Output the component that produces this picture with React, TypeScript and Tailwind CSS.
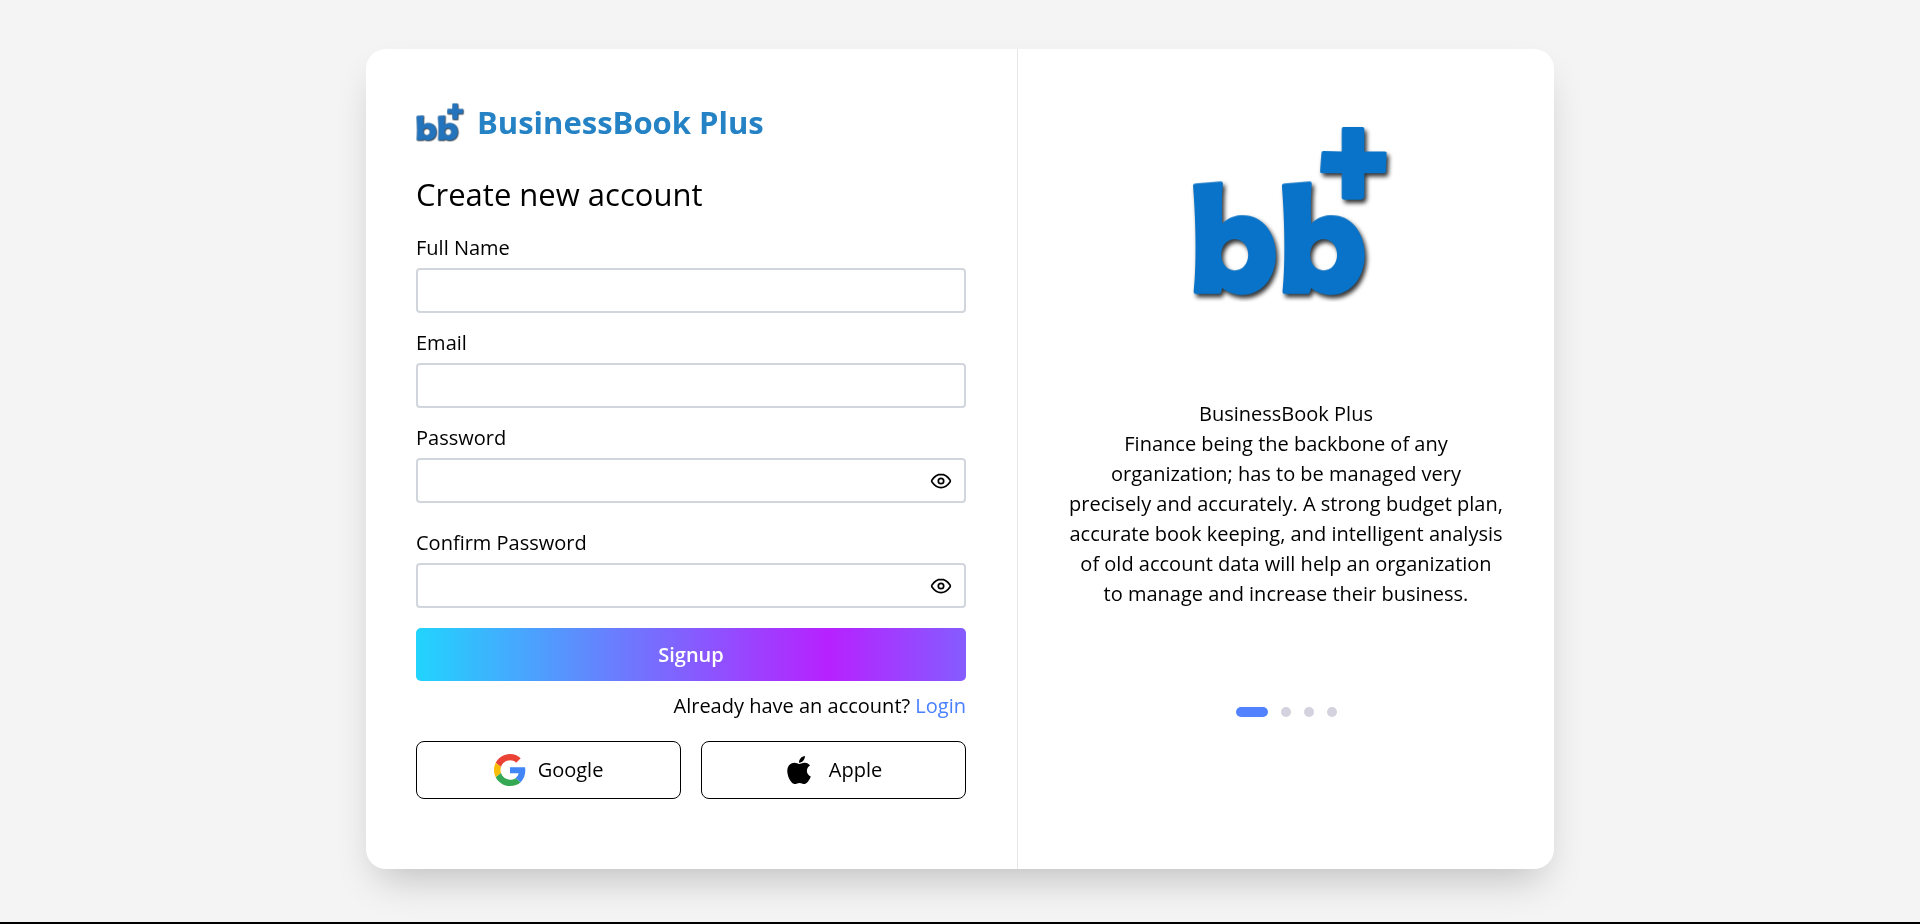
import { useState } from "react";

function Logo({ id, color, className }: { id: string; color: string; className: string }) {
  const letter =
    "M96 257 Q97 252 104 252 L178 246 Q186 245 186 252 Q181 300 184 372 C205 352 224 347 246 347 C305 347 345 400 345 467 C345 535 303 587 244 587 C222 587 200 580 184 566 Q182 573 180 580 Q178 584 172 584 L104 584 Q97 583 98 576 C106 510 106 380 96 257 Z M221 419 C199 419 181 438 181 466 C181 494 199 513 221 513 C244 513 262 494 262 466 C262 438 244 419 221 419 Z";
  return (
    <svg viewBox="90 76 610 532" preserveAspectRatio="none" className={className} aria-hidden="true">
      <defs>
        <filter id={id} x="-10%" y="-10%" width="125%" height="125%" colorInterpolationFilters="sRGB">
          <feDropShadow dx="7" dy="10" stdDeviation="6" floodColor="#000" floodOpacity="0.8" />
        </filter>
      </defs>
      <g fill={color} fillRule="evenodd" filter={`url(#${id})`}>
        <path d={letter} />
        <path d={letter} transform="translate(267 0)" />
        <path d="M548 82 H605 Q611 82 611 88 V156 H673 Q679 156 678 162 L676 216 Q676 221 670 221 H611 V292 Q609 300 600 301 H550 Q543 300 543 294 V221 H484 Q478 221 478 215 L482 160 Q482 154 488 154 L543 156 V88 Q543 82 548 82 Z" />
      </g>
    </svg>
  );
}

function EyeIcon() {
  return (
    <svg viewBox="0 0 24 24" className="size-6" fill="none" stroke="currentColor" strokeWidth="1.700" strokeLinejoin="round" aria-hidden="true">
      <path d="M12 5.300C8.200 5.300 5.300 7.600 3 10.900Q2.300 12 3 13.100C5.300 16.400 8.200 18.700 12 18.700C15.800 18.700 18.700 16.400 21 13.100Q21.700 12 21 10.900C18.700 7.600 15.800 5.300 12 5.300Z" />
      <circle cx="12" cy="12" r="2.700" />
    </svg>
  );
}

function GoogleIcon() {
  return (
    <svg viewBox="0 0 48 48" className="size-8" aria-hidden="true">
      <path fill="#EA4335" d="M24 9.500c3.540 0 6.710 1.220 9.210 3.600l6.850-6.850C35.900 2.380 30.470 0 24 0 14.620 0 6.510 5.380 2.560 13.220l7.980 6.190C12.430 13.720 17.740 9.500 24 9.500z" />
      <path fill="#4285F4" d="M46.980 24.550c0-1.570-.15-3.090-.38-4.550H24v9.020h12.940c-.58 2.960-2.260 5.480-4.780 7.180l7.730 6c4.510-4.180 7.090-10.360 7.090-17.650z" />
      <path fill="#FBBC05" d="M10.530 28.590c-.48-1.450-.76-2.990-.76-4.590s.27-3.140.76-4.590l-7.980-6.190C.92 16.460 0 20.120 0 24c0 3.880.92 7.540 2.560 10.780l7.970-6.190z" />
      <path fill="#34A853" d="M24 48c6.480 0 11.930-2.130 15.890-5.810l-7.730-6c-2.150 1.450-4.920 2.300-8.160 2.300-6.260 0-11.570-4.220-13.470-9.910l-7.980 6.190C6.510 42.620 14.620 48 24 48z" />
    </svg>
  );
}

function AppleIcon() {
  return (
    <svg viewBox="0 0 384 512" className="h-8 w-6" fill="currentColor" aria-hidden="true">
      <path d="M318.700 268.700c-.2-36.700 16.400-64.400 50-84.800-18.800-26.900-47.200-41.700-84.700-44.600-35.500-2.800-74.300 20.700-88.500 20.700-15 0-49.400-19.700-76.400-19.700C63.300 141.200 4 184.800 4 273.500q0 39.300 14.400 81.200c12.800 36.700 59 126.700 107.200 125.200 25.200-.6 43-17.900 75.800-17.900 31.800 0 48.300 17.900 76.400 17.900 48.600-.7 90.400-82.500 102.600-119.300-65.200-30.700-61.700-90-61.700-91.900zm-56.600-164.200c27.300-32.400 24.800-61.900 24-72.500-24.100 1.400-52 16.400-67.900 34.900-17.500 19.800-27.800 44.300-25.600 71.900 26.100 2 49.900-11.400 69.500-34.300z" />
    </svg>
  );
}

const inputClass = "h-[45px] w-full rounded border-2 border-gray-300 bg-white px-3 outline-none focus:border-blue-400";

function Field({ id, label, type }: { id: string; label: string; type: string }) {
  return (
    <div>
      <label htmlFor={id} className="mb-[5px] block">{label}</label>
      <input id={id} type={type} className={inputClass} />
    </div>
  );
}

function PasswordField({ id, label }: { id: string; label: string }) {
  const [shown, setShown] = useState(false);
  return (
    <div>
      <label htmlFor={id} className="mb-[5px] block">{label}</label>
      <div className="relative">
        <input id={id} type={shown ? "text" : "password"} className={inputClass} />
        <button type="button" aria-label={`Show ${label}`} onClick={() => setShown(!shown)} className="absolute inset-y-0 right-[13px] flex items-center">
          <EyeIcon />
        </button>
      </div>
    </div>
  );
}

export default function App() {
  return (
    <div className="flex min-h-screen flex-col items-center border-b-2 border-black bg-[#f4f4f4] px-6 pt-[49px] pb-[53px] font-['Open_Sans',sans-serif] text-[20px] leading-[30px] text-black">
      <main className="grid w-full max-w-[1188px] grow grid-cols-[652fr_536fr] rounded-[20px] bg-white shadow-[0_20px_40px_-12px_rgba(0,0,0,0.23)]">
        <section className="border-r border-gray-200 pt-[50px] pr-[51px] pl-[50px]">
          <div className="flex items-center gap-3">
            <Logo id="logo-small" color="#2474bd" className="h-[39px] w-[49px]" />
            <span className="text-[31px] leading-[46px] font-bold text-[#2482c5]">BusinessBook Plus</span>
          </div>
          <h1 className="mt-[26px] mb-4 text-[31px] leading-[46px]">Create new account</h1>
          <form className="flex flex-col" onSubmit={(e) => e.preventDefault()}>
            <div className="flex flex-col gap-[15px]">
              <Field id="name" label="Full Name" type="text" />
              <Field id="email" label="Email" type="email" />
              <PasswordField id="password" label="Password" />
            </div>
            <div className="mt-[25px]">
              <PasswordField id="confirm" label="Confirm Password" />
            </div>
            <button type="submit" className="mt-5 h-[53px] rounded-[5px] bg-[linear-gradient(90deg,#21d4fd_0%,#b721ff_75%,#855cff_100%)] font-semibold text-white">
              Signup
            </button>
            <p className="mt-[10px] text-right">
              Already have an account? <a href="#login" className="text-[#4880ff]">Login</a>
            </p>
            <div className="mt-5 grid grid-cols-2 gap-5">
              <button type="button" className="flex h-[58px] items-center justify-center gap-3 rounded-[8px] border border-black">
                <GoogleIcon />
                Google
              </button>
              <button type="button" className="flex h-[58px] items-center justify-center gap-[18px] rounded-[8px] border border-black pl-[2px]">
                <AppleIcon />
                Apple
              </button>
            </div>
          </form>
        </section>
        <section className="flex flex-col items-center px-[50px] pt-[76px] text-center">
          <Logo id="logo-large" color="#0873c8" className="ml-3 h-[177px] w-[203px]" />
          <div className="mt-[97px] max-w-[435px]">
            <h2>BusinessBook Plus</h2>
            <p>
              Finance being the backbone of any organization; has to be managed very precisely and accurately. A strong
              budget plan, accurate book keeping, and intelligent analysis of old account data will help an organization
              to manage and increase their business.
            </p>
          </div>
          <div className="mt-[98px] flex gap-[13px]">
            <button type="button" aria-label="Slide 1" className="h-[10px] w-8 rounded-full bg-[#5282ff]" />
            <button type="button" aria-label="Slide 2" className="size-[10px] rounded-full bg-[#d3d2de]" />
            <button type="button" aria-label="Slide 3" className="size-[10px] rounded-full bg-[#d3d2de]" />
            <button type="button" aria-label="Slide 4" className="size-[10px] rounded-full bg-[#d3d2de]" />
          </div>
        </section>
      </main>
    </div>
  );
}
